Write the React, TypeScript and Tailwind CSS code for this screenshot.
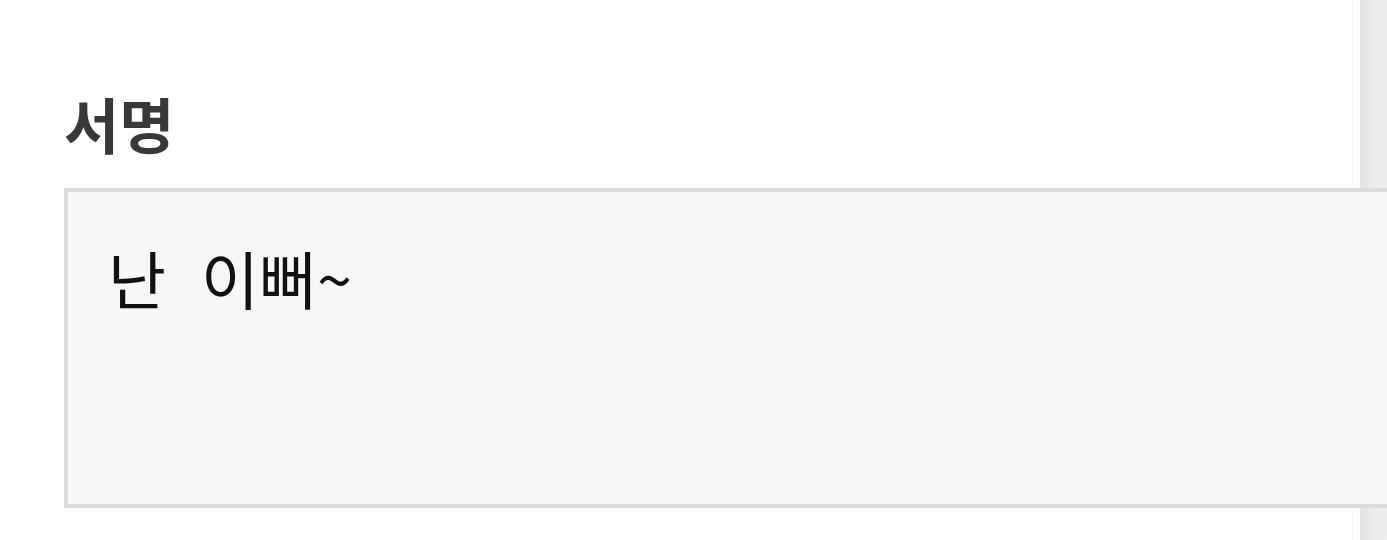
import React from "react";

export default function App() {
  return (
    <div className="relative w-full h-[540px] overflow-hidden bg-white" style={{ fontFamily: '"Noto Sans CJK KR", "Noto Sans", sans-serif' }}>
      <div className="absolute top-0 bottom-0 right-0 w-[35px] flex">
        <div className="w-[1px] bg-[#f6f6f6]" />
        <div className="w-[7px] bg-white" />
        <div className="flex-1 bg-gradient-to-r from-[#e2e2e2] via-[#ececec] to-[#eeeeee]" />
      </div>
      <div className="relative pl-[64px] pt-[84px]">
        <h2 className="text-[60px] leading-[78px] font-bold text-[#383838]">서명</h2>
        <div className="mt-[26px] w-[1400px] h-[320px] border-4 border-[#dcdcdc] bg-[#f7f7f7] pl-[40px] pt-[45px]">
          <p className="text-[63px] leading-[80px] text-[#111] whitespace-pre [word-spacing:21px]">난 이뻐~</p>
        </div>
      </div>
    </div>
  );
}
